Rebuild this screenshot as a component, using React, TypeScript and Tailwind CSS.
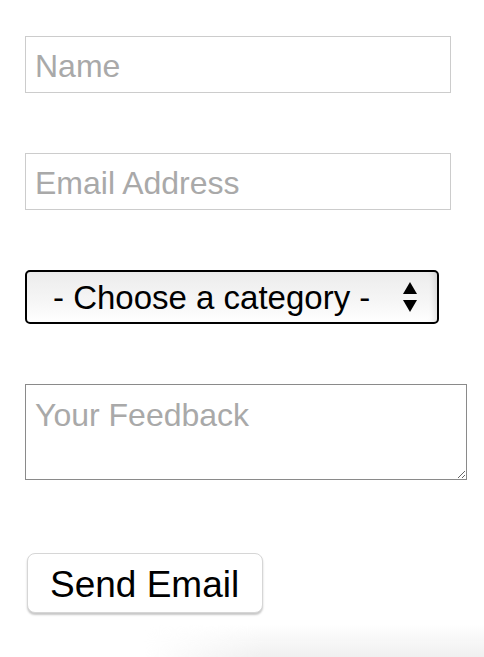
import React from "react";

export default function App() {
  const font = { fontFamily: '"Liberation Sans", Arial, sans-serif' };
  return (
    <div className="relative w-[484px] h-[657px] overflow-hidden bg-white" style={font}>
      <div className="flex flex-col items-start pl-[25px] pt-[36px]">
        <input
          placeholder="Name"
          className="w-[426px] h-[57px] border border-[#cccccc] px-[9px] pt-[4px] text-[32px] leading-[37px] text-black placeholder:text-[#a9a9a9] outline-none"
          style={font}
        />
        <input
          placeholder="Email Address"
          className="mt-[60px] w-[426px] h-[57px] border border-[#cccccc] px-[9px] pt-[3px] text-[32px] leading-[37px] text-black placeholder:text-[#a9a9a9] outline-none"
          style={font}
        />
        <div className="mt-[60px] w-[414px] h-[54px] rounded-[5px] border-2 border-black bg-[linear-gradient(to_bottom,#ececec,#f6f6f6_60%,#ffffff)] shadow-[inset_-6px_0_6px_-4px_rgba(0,0,0,0.12)] flex items-center pl-[26px] pr-[20px]">
          <span className="text-[33px] leading-[37px] text-black flex-1">- Choose a category -</span>
          <svg width="14" height="30" viewBox="0 0 14 30" className="shrink-0">
            <polygon points="7,0 14,12 0,12" fill="#000" />
            <polygon points="0,18 14,18 7,30" fill="#000" />
          </svg>
        </div>
        <textarea
          placeholder="Your Feedback"
          className="mt-[60px] w-[442px] h-[96px] border border-[#8a8a8a] px-[9px] pt-[12px] text-[32px] leading-[37px] text-black placeholder:text-[#a9a9a9] outline-none resize"
          style={font}
        />
        <button
          className="mt-[73px] ml-[2px] w-[236px] h-[60px] rounded-[8px] border border-[#d6d6d6] bg-white shadow-[0_2px_2px_rgba(0,0,0,0.22)] text-[37px] leading-[42px] text-black text-left pl-[22px] pt-[4px]"
          style={font}
        >
          Send Email
        </button>
      </div>
      <div className="absolute bottom-0 right-0 w-[340px] h-[32px] bg-[linear-gradient(to_bottom,rgba(240,240,240,0),#f0f0f0)] [mask-image:linear-gradient(to_right,transparent,black_35%)]" />
    </div>
  );
}
